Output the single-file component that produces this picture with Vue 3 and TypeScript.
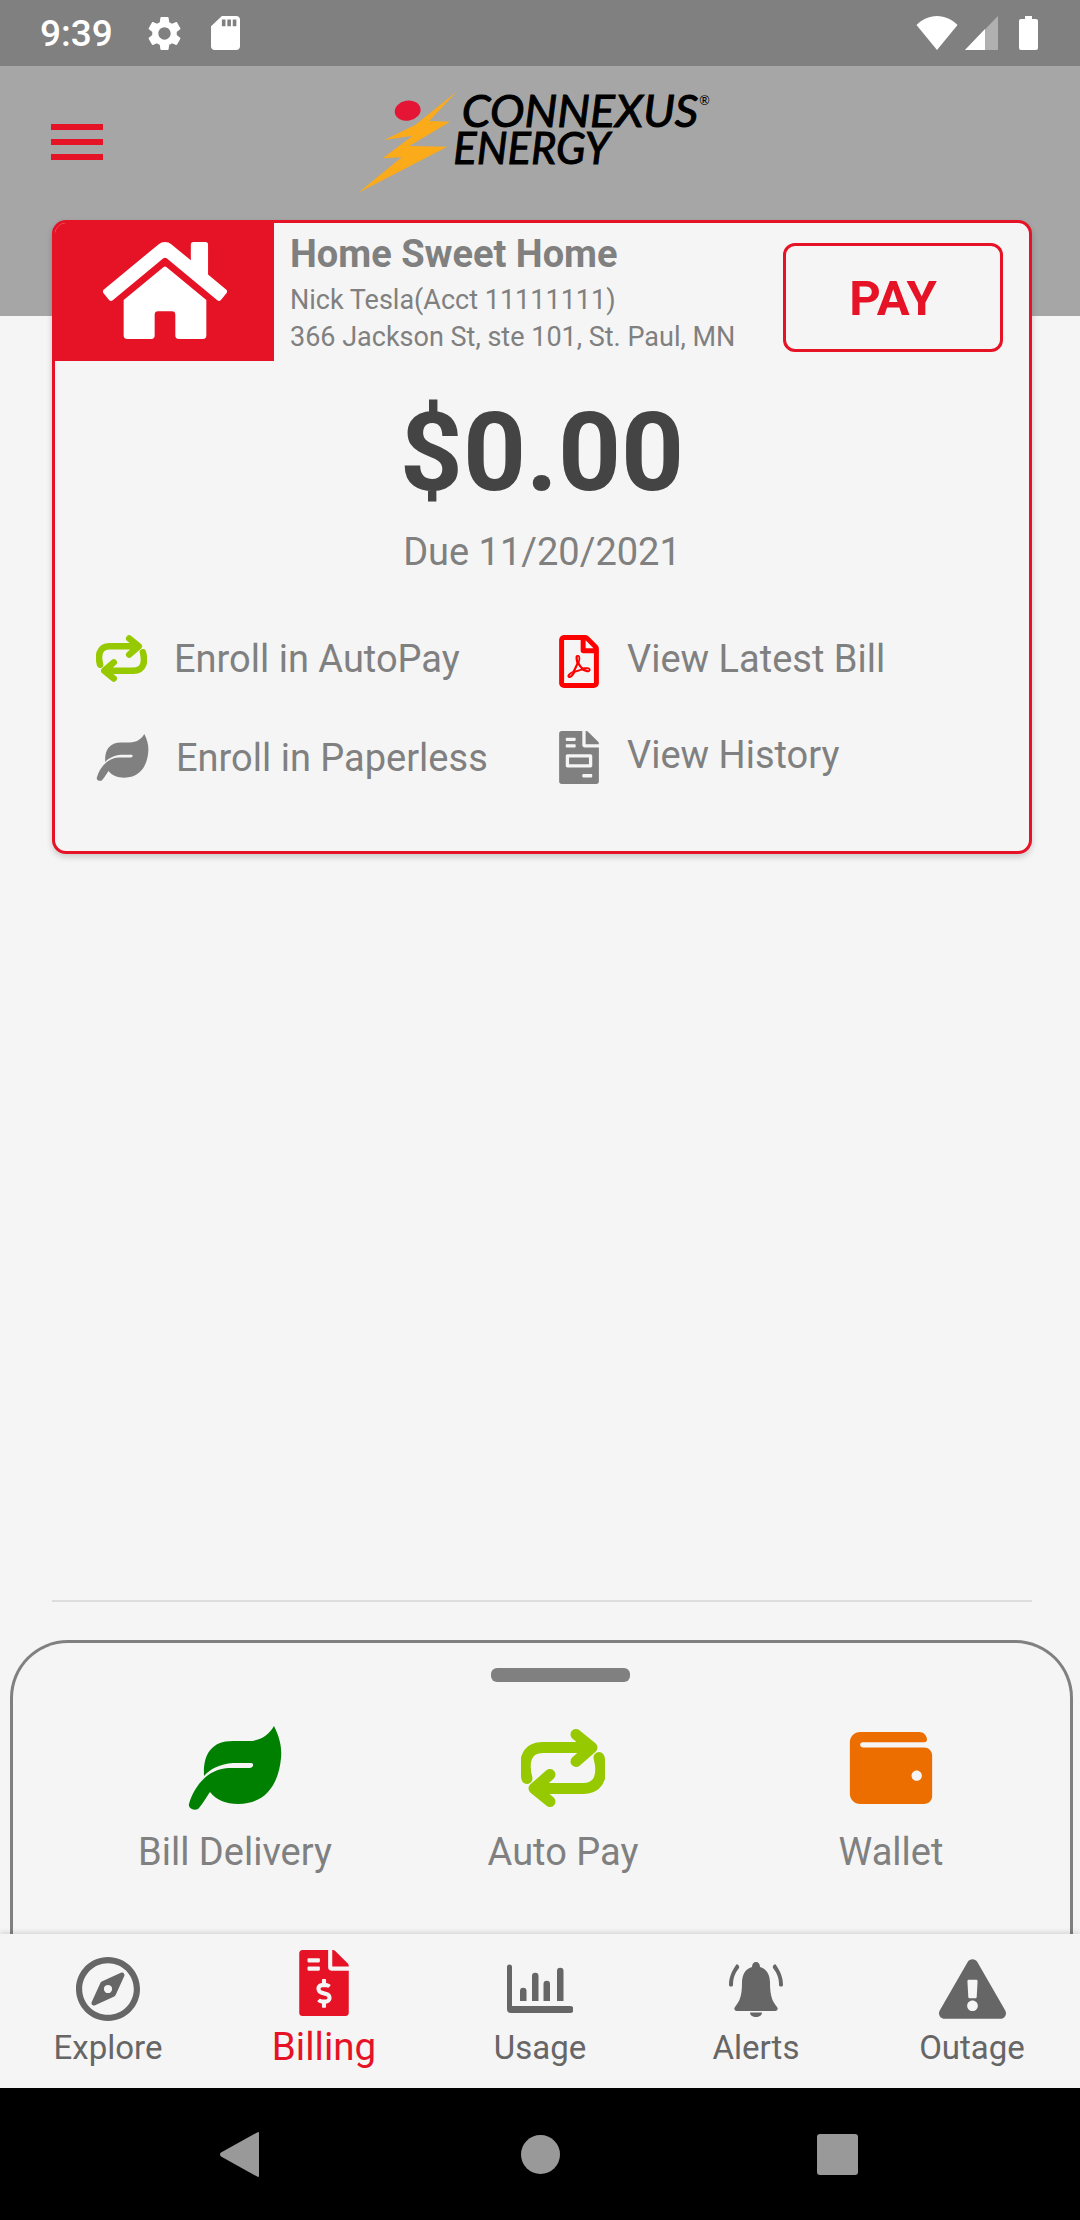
<script setup lang="ts">
interface Tab { label: string; w: number; h: number; vb: string; d: string; active?: boolean }

const tabs: Tab[] = [
  { label: 'Explore', w: 64, h: 64, vb: '0 8 496 496', d: 'M347.94 129.86L203.6 195.83a31.938 31.938 0 0 0-15.77 15.77l-65.97 144.34c-7.61 16.65 9.54 33.81 26.2 26.2l144.34-65.97a31.938 31.938 0 0 0 15.77-15.77l65.97-144.34c7.61-16.66-9.54-33.81-26.2-26.2zm-77.36 148.72c-12.47 12.47-32.69 12.47-45.16 0-12.47-12.47-12.47-32.69 0-45.16 12.47-12.47 32.69-12.47 45.16 0 12.47 12.47 12.47 32.69 0 45.16zM248 8C111.03 8 0 119.03 0 256s111.03 248 248 248 248-111.03 248-248S384.97 8 248 8zm0 448c-110.28 0-200-89.72-200-200S137.72 56 248 56s200 89.72 200 200-89.72 200-200 200z' },
  { label: 'Billing', w: 50, h: 66, vb: '0 0 384 512', active: true, d: 'M377 105L279.1 7c-4.5-4.5-10.6-7-17-7H256v128h128v-6.1c0-6.3-2.5-12.4-7-16.9zm-153 31V0H24C10.7 0 0 10.7 0 24v464c0 13.3 10.7 24 24 24h336c13.3 0 24-10.7 24-24V160H248c-13.2 0-24-10.8-24-24zM64 72c0-4.42 3.58-8 8-8h80c4.42 0 8 3.58 8 8v16c0 4.42-3.58 8-8 8H72c-4.42 0-8-3.58-8-8V72zm0 80v-16c0-4.42 3.58-8 8-8h80c4.42 0 8 3.58 8 8v16c0 4.42-3.58 8-8 8H72c-4.42 0-8-3.58-8-8zm144 263.88V440c0 4.42-3.58 8-8 8h-16c-4.42 0-8-3.58-8-8v-24.29c-11.29-.58-22.27-4.52-31.37-11.35-3.9-2.93-4.1-8.77-.57-12.14l11.75-11.21c2.77-2.64 6.89-2.76 10.13-.73 3.87 2.42 8.26 3.72 12.82 3.72h28.11c6.5 0 11.8-5.92 11.8-13.19 0-5.95-3.61-11.19-8.77-12.73l-45-13.5c-18.59-5.58-31.58-23.42-31.58-43.39 0-24.52 19.05-44.44 42.67-45.07V232c0-4.42 3.58-8 8-8h16c4.42 0 8 3.58 8 8v24.29c11.29.58 22.27 4.51 31.37 11.35 3.9 2.93 4.1 8.77.57 12.14l-11.75 11.21c-2.77 2.64-6.89 2.76-10.13.73-3.87-2.43-8.26-3.72-12.82-3.72h-28.11c-6.5 0-11.8 5.92-11.8 13.19 0 5.95 3.61 11.19 8.77 12.73l45 13.5c18.59 5.58 31.58 23.42 31.58 43.39 0 24.53-19.05 44.44-42.67 45.07z' },
  { label: 'Usage', w: 66, h: 50, vb: '0 0 66 50', d: 'M0 3a2.5 2.5 0 0 1 5 0V42H63a3.5 3.5 0 0 1 0 7H4a4 4 0 0 1-4-4ZM13 27a3 3 0 0 1 6.500 0V37H13ZM25 12a3 3 0 0 1 6.500 0V37H25ZM36.500 20a3 3 0 0 1 6.500 0V37H36.500ZM50 7a3 3 0 0 1 6.500 0V37H50Z' },
  { label: 'Alerts', w: 56, h: 55, vb: '0 0 56 55', d: 'M28 0c2.500 0 4 2 4 5c7 2 10 8 10 16c0 14 3 19 7 24c1.500 2 .5 4-2 4H9c-2.500 0-3.500-2-2-4c4-5 7-10 7-24c0-8 3-14 10-16c0-3 1.500-5 4-5zM22 50.500h12c0 3-3 4.500-6 4.500s-6-1.500-6-4.500zM8 3c-4 6-7 12-7 20 0 2 4 2 4 0 0-7 2-12 6-17 1-2-2-5-3-3zM48 3c4 6 7 12 7 20 0 2-4 2-4 0 0-7-2-12-6-17-1-2 2-5 3-3z' },
  { label: 'Outage', w: 67, h: 60, vb: '0 0 576 512', d: 'M569.517 440.013C587.975 472.007 564.806 512 527.94 512H48.054c-36.937 0-59.999-40.055-41.577-71.987L246.423 24.035c18.467-32.009 64.72-31.951 83.154 0l239.94 416.978zM288 354c-25.405 0-46 20.595-46 46s20.595 46 46 46 46-20.595 46-46-20.595-46-46-46zm-43.673-165.346l7.418 136c.347 6.364 5.609 11.346 11.982 11.346h48.546c6.373 0 11.635-4.982 11.982-11.346l7.418-136c.375-6.874-5.098-12.654-11.982-12.654h-63.383c-6.884 0-12.356 5.78-11.981 12.654z' },
]

const leaf = 'M86 0C92 12 94 22 93 32C91 55 80 78 50 78C38 78 28 74 22 66C18 72 13 80 10 83C5 85 0 82 1 78C6 60 20 43 40 42L62 42C66 41 66 37 63 37L45 37C32 38 22 43 16 50C15 30 22 15 45 15L60 15C72 15 80 10 86 0Z'
</script>

<template>
  <div class="screen">
    <div class="status">
      <span class="time">9:39</span>
      <svg class="gear" viewBox="0 0 24 24"><path fill="#fff" d="M19.14 12.94c.04-.3.06-.61.06-.94 0-.32-.02-.64-.07-.94l2.03-1.58c.18-.14.23-.41.12-.61l-1.92-3.32c-.12-.22-.37-.29-.59-.22l-2.39.96c-.5-.38-1.03-.7-1.62-.94l-.36-2.54c-.04-.24-.24-.41-.48-.41h-3.84c-.24 0-.43.17-.47.41l-.36 2.54c-.59.24-1.13.57-1.62.94l-2.39-.96c-.22-.08-.47 0-.59.22L2.74 8.87c-.12.21-.08.47.12.61l2.03 1.58c-.05.3-.09.63-.09.94s.02.64.07.94l-2.03 1.58c-.18.14-.23.41-.12.61l1.92 3.32c.12.22.37.29.59.22l2.39-.96c.5.38 1.03.7 1.62.94l.36 2.54c.05.24.24.41.48.41h3.84c.24 0 .44-.17.47-.41l.36-2.54c.59-.24 1.13-.56 1.62-.94l2.39.96c.22.08.47 0 .59-.22l1.92-3.32c.12-.22.07-.47-.12-.61l-2.01-1.58zM12 15.6c-1.98 0-3.6-1.62-3.6-3.6s1.62-3.6 3.6-3.6 3.6 1.62 3.6 3.6-1.62 3.6-3.6 3.6z" /></svg>
      <svg class="sd" viewBox="4 2 16 20" preserveAspectRatio="none"><path fill="#fff" d="M18 2h-8L4.020 8 4 20c0 1.100.9 2 2 2h12c1.100 0 2-.9 2-2V4c0-1.100-.9-2-2-2zm-6 6h-2V4h2v4zm3 0h-2V4h2v4zm3 0h-2V4h2v4z" /></svg>
      <span class="grow"></span>
      <svg class="wifi" viewBox="0 0 42 34"><path fill="#fff" d="M21 34L.5 9C6 3.500 13 0 21 0s15 3.500 20.500 9z" /></svg>
      <svg class="signal" viewBox="0 0 33 34"><path fill="#b0b0b0" d="M33 0V34H0z" /><path fill="#fff" d="M20 13V34H0z" /></svg>
      <svg class="battery" viewBox="0 0 19 34"><path fill="#fff" d="M6 0h7v3h4a2 2 0 0 1 2 2v27a2 2 0 0 1-2 2H2a2 2 0 0 1-2-2V5a2 2 0 0 1 2-2h4z" /></svg>
    </div>

    <header class="hero">
      <div class="burger"><i></i><i></i><i></i></div>
      <svg class="logo" viewBox="0 0 1170 390">
        <path fill="#fbaa19" d="M350 65L268 153L330 155L208 228L322 230L55 368L185 262L128 265L218 197L133 210L225 165Z" />
        <ellipse cx="203" cy="122" rx="39" ry="30" fill="#e41535" transform="rotate(-10 203 122)" />
        <text x="365" y="172" class="lt" textLength="710" lengthAdjust="spacingAndGlyphs">CONNEXUS</text>
        <text x="340" y="283" class="lt" textLength="470" lengthAdjust="spacingAndGlyphs">ENERGY</text>
        <text x="1078" y="105" class="reg">®</text>
      </svg>
    </header>

    <section class="card">
      <div class="card-top">
        <div class="home-tile">
          <svg class="home" viewBox="0 32 576 448" preserveAspectRatio="none"><path fill="#fff" d="M280.37 148.26L96 300.11V464a16 16 0 0 0 16 16l112.06-.29a16 16 0 0 0 15.92-16V368a16 16 0 0 1 16-16h64a16 16 0 0 1 16 16v95.640a16 16 0 0 0 16 16.050L464 480a16 16 0 0 0 16-16V300L295.670 148.260a12.190 12.190 0 0 0-15.300 0zM571.600 251.470L488 182.560V44.050a12 12 0 0 0-12-12h-56a12 12 0 0 0-12 12v72.610L318.470 43a48 48 0 0 0-61 0L4.340 251.470a12 12 0 0 0-1.600 16.900l25.500 31A12 12 0 0 0 45.150 301l235.220-193.740a12.190 12.190 0 0 1 15.300 0L530.900 301a12 12 0 0 0 16.900-1.600l25.500-31a12 12 0 0 0-1.700-16.930z" /></svg>
        </div>
        <div class="acct">
          <div class="name">Home Sweet Home</div>
          <div class="line">Nick Tesla(Acct 11111111)</div>
          <div class="line">366 Jackson St, ste 101, St. Paul, MN</div>
        </div>
        <button class="pay">PAY</button>
      </div>

      <div class="amount">$0.00</div>
      <div class="due">Due 11/20/2021</div>

      <div class="links">
        <div class="col left">
          <div class="link first">
            <svg class="i-sync" viewBox="0 0 84 79"><g fill="none" stroke="#97c900" stroke-width="11" stroke-linecap="round" stroke-linejoin="round"><path d="M6 50C2 35 4 19 22 19H68M55 6L71 19L55 33" /><path d="M78 29C82 44 80 60 62 60H16M29 73L13 60L29 46" /></g></svg>
            <span>Enroll in AutoPay</span>
          </div>
          <div class="link second">
            <svg class="i-leaf" viewBox="0 0 94 84"><path fill="#808080" :d="leaf" /></svg>
            <span>Enroll in Paperless</span>
          </div>
        </div>
        <div class="col right">
          <div class="link first">
            <svg class="i-file" viewBox="0 0 384 512"><path fill="#ff0000" d="M369.900 97.900L286 14C277 5 264.800-.1 252.100-.1H48C21.500 0 0 21.500 0 48v416c0 26.500 21.500 48 48 48h288c26.500 0 48-21.500 48-48V131.900c0-12.700-5.100-25-14.100-34zM332.100 128H256V51.900l76.100 76.100zM48 464V48h160v104c0 13.300 10.700 24 24 24h104v288H48zm250.200-143.700c-12.200-12-47-8.700-64.400-6.500-17.200-10.500-28.700-25-36.800-46.300 3.900-16.100 10.100-40.600 5.400-56-4.200-26.200-37.800-23.600-42.600-5.900-4.400 16.100-.4 38.500 7 67.100-10 23.900-24.900 56-35.400 74.400-20 10.300-47 26.200-51 46.200-3.300 15.800 26 55.200 76.100-31.200 22.400-7.400 46.800-16.500 68.400-20.100 18.900 10.200 41 17 55.800 17 25.500 0 28-28.200 17.500-38.700zm-198.100 77.800c5.100-13.700 24.500-29.500 30.400-35-19 30.300-30.400 35.700-30.400 35zm81.600-190.600c7.400 0 6.700 32.100 1.800 40.800-4.400-13.900-4.300-40.800-1.800-40.800zm-24.400 136.600c9.700-16.900 18-37 24.700-54.700 8.300 15.100 18.900 27.200 30.100 35.500-20.800 4.300-38.900 13.100-54.800 19.200zm131.600-5s-5 6-37.300-7.800c35.100-2.600 40.900 5.400 37.300 7.800z" /></svg>
            <span>View Latest Bill</span>
          </div>
          <div class="link second">
            <svg class="i-file" viewBox="0 0 384 512"><path fill="#808080" d="M288 256H96v64h192v-64zm89-151L279.100 7c-4.500-4.500-10.600-7-17-7H256v128h128v-6.100c0-6.300-2.500-12.400-7-16.900zm-153 31V0H24C10.700 0 0 10.700 0 24v464c0 13.300 10.700 24 24 24h336c13.300 0 24-10.700 24-24V160H248c-13.200 0-24-10.800-24-24zM64 72c0-4.420 3.580-8 8-8h80c4.420 0 8 3.580 8 8v16c0 4.420-3.580 8-8 8H72c-4.420 0-8-3.580-8-8V72zm0 64c0-4.420 3.580-8 8-8h80c4.420 0 8 3.580 8 8v16c0 4.420-3.580 8-8 8H72c-4.420 0-8-3.580-8-8v-16zm256 304c0 4.420-3.580 8-8 8h-80c-4.420 0-8-3.580-8-8v-16c0-4.420 3.580-8 8-8h80c4.420 0 8 3.580 8 8v16zm0-200v96c0 8.840-7.160 16-16 16H80c-8.840 0-16-7.160-16-16v-96c0-8.840 7.160-16 16-16h224c8.840 0 16 7.160 16 16z" /></svg>
            <span>View History</span>
          </div>
        </div>
      </div>
    </section>

    <div class="spacer"></div>
    <div class="rule"></div>

    <section class="sheet">
      <div class="handle"></div>
      <div class="actions">
        <div class="action">
          <svg class="a-icon leaf-big" viewBox="0 0 94 84"><path fill="#008000" :d="leaf" /></svg>
          <span>Bill Delivery</span>
        </div>
        <div class="action">
          <svg class="a-icon sync-big" viewBox="0 0 84 79"><g fill="none" stroke="#97c900" stroke-width="11" stroke-linecap="round" stroke-linejoin="round"><path d="M6 50C2 35 4 19 22 19H68M55 6L71 19L55 33" /><path d="M78 29C82 44 80 60 62 60H16M29 73L13 60L29 46" /></g></svg>
          <span>Auto Pay</span>
        </div>
        <div class="action">
          <svg class="a-icon wallet" viewBox="0 32 512 448"><path fill="#ec6e00" d="M461.200 128H80c-8.840 0-16-7.160-16-16s7.160-16 16-16h384c8.840 0 16-7.160 16-16 0-26.510-21.490-48-48-48H64C28.650 32 0 60.650 0 96v320c0 35.350 28.650 64 64 64h397.200c28.020 0 50.800-21.530 50.800-48V176c0-26.470-22.780-48-50.800-48zM416 336c-17.670 0-32-14.330-32-32s14.330-32 32-32 32 14.330 32 32-14.330 32-32 32z" /></svg>
          <span>Wallet</span>
        </div>
      </div>
    </section>

    <nav class="tabs">
      <div v-for="t in tabs" :key="t.label" class="tab" :class="{ active: t.active }">
        <div class="tab-icon">
          <svg :viewBox="t.vb" :style="{ width: t.w + 'px', height: t.h + 'px' }"><path fill="currentColor" :d="t.d" /></svg>
        </div>
        <span>{{ t.label }}</span>
      </div>
    </nav>

    <div class="sysnav">
      <svg class="back" viewBox="0 0 39 45"><path fill="#999" d="M38 0a1 1 0 0 1 1 1V44a1 1 0 0 1-1 1L1 24.500a2.500 2.500 0 0 1 0-4z" /></svg>
      <div class="dot"></div>
      <div class="sq"></div>
    </div>
  </div>
</template>

<style>
html, body { margin: 0; padding: 0; background: #f5f5f5; }
</style>

<style scoped>
.screen {
  width: 1080px;
  height: 2220px;
  display: flex;
  flex-direction: column;
  background: #f5f5f5;
  overflow: hidden;
  font-family: Roboto, "Liberation Sans", sans-serif;
  color: #808080;
}
.status {
  height: 66px;
  flex: none;
  background: #808080;
  display: flex;
  align-items: center;
  padding: 0 42px 0 40px;
  box-sizing: border-box;
}
.time { color: #fff; font-size: 37px; font-weight: 500; width: 73px; }
.gear { width: 41px; height: 41px; margin-left: 31px; }
.sd { width: 29px; height: 34px; margin-left: 26px; }
.grow { flex: 1; }
.wifi { width: 42px; height: 34px; }
.signal { width: 33px; height: 34px; margin-left: 7px; }
.battery { width: 19px; height: 34px; margin-left: 21px; }

.hero {
  height: 250px;
  flex: none;
  background: #a6a6a6;
  display: flex;
  align-items: flex-start;
}
.burger {
  margin: 58px 0 0 51px;
  width: 52px;
  display: flex;
  flex-direction: column;
  gap: 9px;
}
.burger i { display: block; height: 6px; background: #e61226; }
.logo { width: 390px; height: 130px; margin: 4px 0 0 237px; }
.lt { font-family: Lato, sans-serif; font-style: italic; font-weight: 400; font-size: 132px; fill: #000; stroke: #000; stroke-width: 3px; }
.reg { font-family: Lato, sans-serif; font-size: 38px; fill: #000; }

.card {
  flex: none;
  height: 634px;
  box-sizing: border-box;
  margin: -96px 48px 0 52px;
  border: 3px solid #e61226;
  border-radius: 14px;
  background: #f5f5f5;
  box-shadow: 0 3px 6px rgba(0, 0, 0, 0.18);
  overflow: hidden;
  position: relative;
}
.card-top { display: flex; height: 138px; }
.home-tile {
  width: 219px;
  flex: none;
  background: #e61226;
  display: flex;
  justify-content: center;
  align-items: center;
  margin-left: -3px;
  margin-top: -3px;
  height: 141px;
  padding-left: 3px;
}
.home { width: 124px; height: 97px; }
.acct { margin-left: 16px; width: 493px; flex: none; }
.name { font-size: 38px; font-weight: 700; line-height: 42px; margin-top: 10px; }
.line { font-size: 27px; line-height: 37px; white-space: nowrap; }
.line:nth-child(2) { margin-top: 7px; }
.pay {
  margin: 20px 0 0 0;
  width: 220px;
  height: 109px;
  box-sizing: border-box;
  border: 3px solid #e61226;
  border-radius: 12px;
  background: transparent;
  color: #e61226;
  font: 700 49px Roboto, sans-serif;
  padding: 2px 0 0;
}
.amount {
  text-align: center;
  font-size: 110px;
  font-weight: 700;
  line-height: 122px;
  color: #444;
  margin-top: 31px;
}
.due { text-align: center; font-size: 38px; line-height: 44px; margin-top: 16px; }
.links { display: flex; margin-top: 61px; }
.col { display: flex; flex-direction: column; }
.col.left { width: 504px; padding-left: 41px; box-sizing: border-box; }
.link { display: flex; align-items: center; font-size: 38px; white-space: nowrap; }
.left .link:first-child { height: 47px; }
.left .link.second { height: 47px; margin-top: 52px; }
.right .link:first-child { height: 53px; }
.right .link.second { height: 53px; margin-top: 43px; }
.i-sync { width: 51px; height: 47px; margin-right: 27px; }
.i-leaf { width: 53px; height: 47px; margin-right: 27px; }
.i-file { width: 40px; height: 53px; margin-right: 28px; }
.right .link span { margin-top: -6px; }

.spacer { flex: 1; }
.rule { height: 2px; background: #ddd; margin: 0 48px 0 52px; flex: none; }
.sheet {
  flex: none;
  height: 294px;
  margin: 38px 7px 0 10px;
  box-sizing: border-box;
  border: 3px solid #808080;
  border-bottom: none;
  border-radius: 58px 58px 0 0;
  position: relative;
}
.handle { width: 139px; height: 14px; border-radius: 6px; background: #808080; margin: 25px 0 0 478px; }
.actions { display: grid; grid-template-columns: repeat(3, 328px); padding-left: 58px; margin-top: 44px; }
.action { display: flex; flex-direction: column; align-items: center; font-size: 38px; }
.a-icon { display: block; height: 84px; }
.leaf-big { width: 94px; }
.sync-big { width: 84px; }
.wallet { width: 84px; height: 72px; margin: 6px 0; }
.action span { line-height: 44px; margin-top: 20px; }

.tabs {
  flex: none;
  height: 154px;
  background: #f5f5f5;
  display: grid;
  grid-template-columns: repeat(5, 216px);
  box-shadow: 0 -2px 5px rgba(0, 0, 0, 0.12);
  position: relative;
}
.tab { display: flex; flex-direction: column; align-items: center; color: #666; font-size: 33px; padding-top: 22px; }
.tab-icon { height: 66px; display: flex; align-items: center; justify-content: center; }
.tab-icon svg { display: block; }
.tab span { line-height: 36px; margin-top: 8px; }
.tab.active { color: #e61226; font-size: 38.500px; }
.tab.active .tab-icon svg { margin-bottom: 12px; }
.tab.active span { margin-top: 7px; }

.sysnav {
  flex: none;
  height: 132px;
  background: #000;
  position: relative;
  display: grid;
  grid-template-columns: 220px 39px 262px 39px 257px 41px;
  align-items: center;
}
.back { grid-column: 2; width: 39px; height: 45px; }
.dot { grid-column: 4; width: 39px; height: 39px; border-radius: 50%; background: #999; }
.sq { grid-column: 6; width: 41px; height: 41px; border-radius: 3px; background: #999; }
</style>
